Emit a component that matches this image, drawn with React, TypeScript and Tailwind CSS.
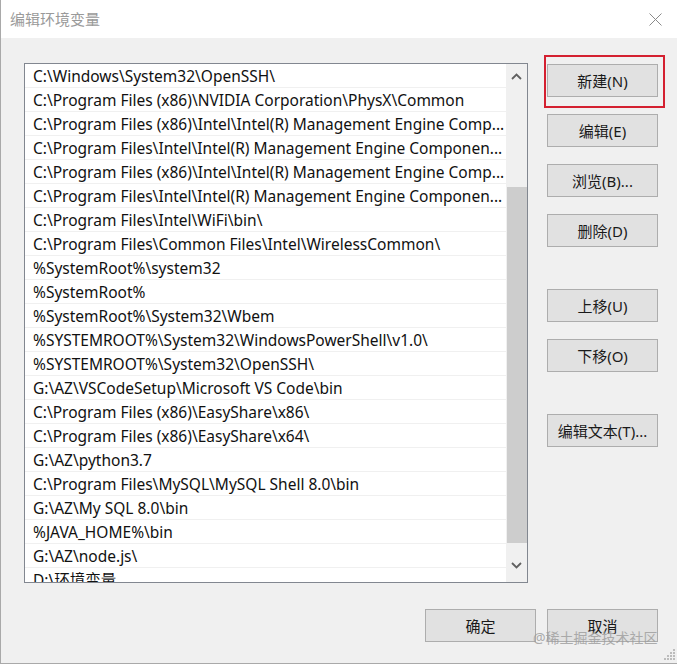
import React from "react";

const rows = [
  "C:\\Windows\\System32\\OpenSSH\\",
  "C:\\Program Files (x86)\\NVIDIA Corporation\\PhysX\\Common",
  "C:\\Program Files (x86)\\Intel\\Intel(R) Management Engine Comp...",
  "C:\\Program Files\\Intel\\Intel(R) Management Engine Componen...",
  "C:\\Program Files (x86)\\Intel\\Intel(R) Management Engine Comp...",
  "C:\\Program Files\\Intel\\Intel(R) Management Engine Componen...",
  "C:\\Program Files\\Intel\\WiFi\\bin\\",
  "C:\\Program Files\\Common Files\\Intel\\WirelessCommon\\",
  "%SystemRoot%\\system32",
  "%SystemRoot%",
  "%SystemRoot%\\System32\\Wbem",
  "%SYSTEMROOT%\\System32\\WindowsPowerShell\\v1.0\\",
  "%SYSTEMROOT%\\System32\\OpenSSH\\",
  "G:\\AZ\\VSCodeSetup\\Microsoft VS Code\\bin",
  "C:\\Program Files (x86)\\EasyShare\\x86\\",
  "C:\\Program Files (x86)\\EasyShare\\x64\\",
  "G:\\AZ\\python3.7",
  "C:\\Program Files\\MySQL\\MySQL Shell 8.0\\bin",
  "G:\\AZ\\My SQL 8.0\\bin",
  "%JAVA_HOME%\\bin",
  "G:\\AZ\\node.js\\",
  "D:\\环境变量",
];

const font = {
  fontFamily: '"Segoe UI", "Noto Sans", "Noto Sans CJK SC", sans-serif',
};

function Btn({ label, className = "" }: { label: string; className?: string }) {
  return (
    <div
      className={
        "w-[111px] h-[33px] flex items-center justify-center pt-[1px] bg-[#e1e1e1] border border-[#adadad] text-[15px] text-[#1a1a1a] " +
        className
      }
    >
      {label}
    </div>
  );
}

export default function App() {
  return (
    <div
      className="relative w-[677px] h-[664px] bg-[#f0f0f0] border-l border-b border-[#a9a9a9] overflow-hidden flex flex-col"
      style={font}
    >
      {/* Title bar */}
      <div className="h-[38px] bg-white flex items-center justify-between pl-[9px] pr-[15px] shrink-0">
        <span className="text-[15px] text-[#9a9a9a] leading-none">编辑环境变量</span>
        <svg width="13" height="13" viewBox="0 0 13 13">
          <path d="M0.5 0.5 L12.5 12.5 M12.5 0.5 L0.5 12.5" stroke="#8a8a8a" strokeWidth="1" />
        </svg>
      </div>

      {/* Body */}
      <div className="flex pt-[25px] pl-[23px]">
        {/* List */}
        <div className="w-[504px] h-[520px] border border-[#828790] bg-white flex overflow-hidden">
          <div className="flex-1 overflow-hidden flex flex-col">
            {rows.map((r, i) => (
              <div
                key={i}
                className="h-[24px] shrink-0 flex items-center pl-[8px] pt-[3px] border-b border-[#f0f0f0] text-[15.5px] text-[#111] whitespace-nowrap overflow-hidden"
              >
                {r}
              </div>
            ))}
          </div>
          <div className="w-[21px] bg-[#f0f0f0] flex flex-col items-center shrink-0">
            <div className="h-[24px] w-full flex items-center justify-center">
              <svg width="11" height="7" viewBox="0 0 11 7">
                <path d="M1 6 L5.5 1.5 L10 6" stroke="#606060" strokeWidth="1.8" fill="none" />
              </svg>
            </div>
            <div className="h-[99px]" />
            <div className="w-[20px] h-[356px] bg-[#cdcdcd]" />
            <div className="flex-1 w-full flex items-center justify-center">
              <svg width="11" height="7" viewBox="0 0 11 7" className="mt-[6px]">
                <path d="M1 1 L5.5 5.5 L10 1" stroke="#606060" strokeWidth="1.8" fill="none" />
              </svg>
            </div>
          </div>
        </div>

        {/* Buttons column */}
        <div className="ml-[19px] pt-[1px] flex flex-col">
          <div className="relative">
            <Btn label="新建(N)" />
            <div className="absolute left-[-3px] right-[-7px] top-[-9px] bottom-[-11px] border-2 border-[#d42030]" />
          </div>
          <Btn label="编辑(E)" className="mt-[17px]" />
          <Btn label="浏览(B)..." className="mt-[17px]" />
          <Btn label="删除(D)" className="mt-[17px]" />
          <Btn label="上移(U)" className="mt-[42px]" />
          <Btn label="下移(O)" className="mt-[17px]" />
          <Btn label="编辑文本(T)..." className="mt-[42px]" />
        </div>
      </div>

      {/* Footer */}
      <div className="flex pt-[26px] pl-[424px] gap-[11px]">
        <Btn label="确定" />
        <Btn label="取消" />
      </div>

      {/* Watermark */}
      <div className="absolute left-[532px] top-[627px] text-[14px] text-[#9c9c9c] opacity-80 whitespace-nowrap">
        @稀土掘金技术社区
      </div>

      {/* Resize grip */}
      <svg className="absolute right-[1px] bottom-[2px]" width="12" height="12" viewBox="0 0 12 12">
        {[
          [9, 1],
          [6, 4],
          [9, 4],
          [3, 7],
          [6, 7],
          [9, 7],
          [0, 10],
          [3, 10],
          [6, 10],
          [9, 10],
        ].map(([x, y], i) => (
          <rect key={i} x={x} y={y - 1} width="2" height="2" fill="#bcbcbc" />
        ))}
      </svg>
    </div>
  );
}
